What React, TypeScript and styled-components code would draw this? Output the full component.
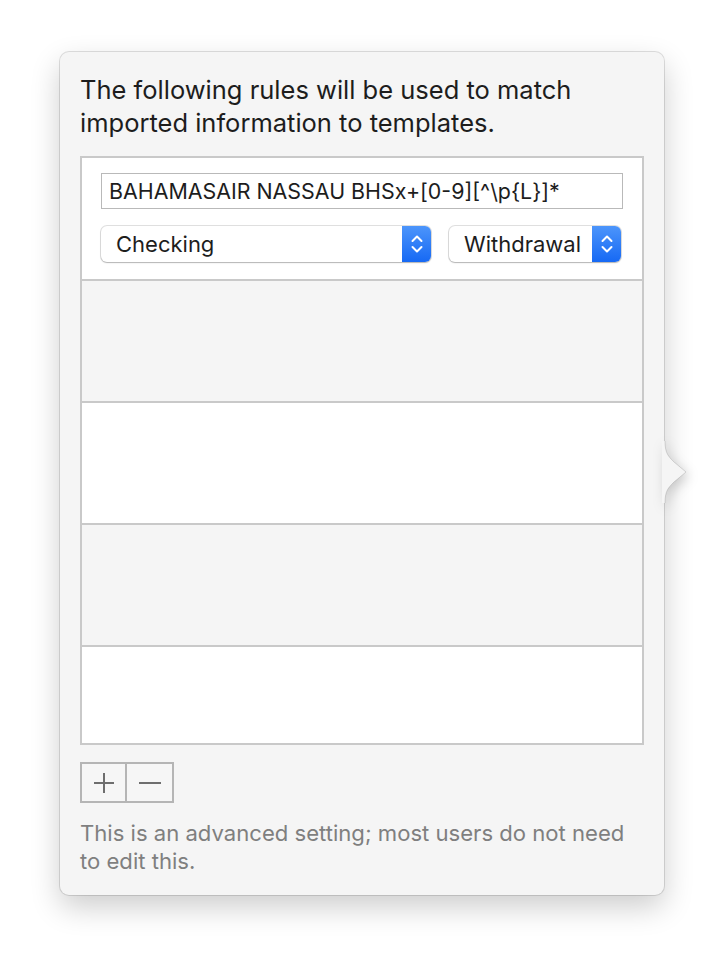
import styled, { createGlobalStyle } from "styled-components";

const GlobalStyle = createGlobalStyle`
  html, body {
    margin: 0;
    padding: 0;
    background: #ffffff;
  }
  body {
    font-family: Inter, "Liberation Sans", Arial, sans-serif;
    -webkit-font-smoothing: antialiased;
  }
`;

const Page = styled.div`
  padding: 52px 0 0 60px;
  height: 964px;
  box-sizing: border-box;
`;

const Popover = styled.div`
  position: relative;
  box-sizing: border-box;
  width: 604px;
  height: 843px;
  padding: 21px 20px 0 20px;
  background: #f5f5f5;
  border-radius: 9px;
  box-shadow: 0 0 0 1px rgba(0, 0, 0, 0.12), 0 12px 30px rgba(0, 0, 0, 0.2);
`;

const Arrow = styled.svg`
  position: absolute;
  top: 389px;
  right: -26px;
  filter: drop-shadow(3px 4px 6px rgba(0, 0, 0, 0.18));
`;

const Heading = styled.p`
  margin: 0 0 17px 0;
  font-size: 25.5px;
  line-height: 33px;
  color: #1d1d1d;
`;

const Table = styled.div`
  border: 2px solid #c9c9c9;
  height: 589px;
  box-sizing: border-box;
  overflow: hidden;
  background: #ffffff;
`;

const Row = styled.div<{ shaded?: boolean }>`
  height: 120px;
  background: ${(p) => (p.shaded ? "#f5f5f5" : "#ffffff")};
  & + & {
    border-top: 2px solid #c9c9c9;
  }
`;

const EditRow = styled(Row)`
  box-sizing: border-box;
  height: 121px;
  padding: 15px 19px 0 19px;
  display: flex;
  flex-direction: column;
  gap: 17px;
`;

const TextField = styled.div`
  box-sizing: border-box;
  height: 36px;
  border: 1px solid #b9b9b9;
  background: #ffffff;
  padding: 0 7px;
  display: flex;
  align-items: center;
  font-size: 21.4px;
  color: #1d1d1d;
  white-space: nowrap;
`;

const PopupRow = styled.div`
  display: flex;
  gap: 18px;
`;

const Popup = styled.div<{ w: number }>`
  box-sizing: border-box;
  width: ${(p) => p.w}px;
  height: 36px;
  display: flex;
  align-items: stretch;
  border-radius: 6px;
  background: #ffffff;
  box-shadow: 0 0 0 1px rgba(0, 0, 0, 0.12), 0 1px 1.5px rgba(0, 0, 0, 0.2);
  overflow: hidden;
`;

const PopupLabel = styled.div`
  flex: 1;
  display: flex;
  align-items: center;
  padding-left: 15px;
  font-size: 22px;
  color: #1d1d1d;
  white-space: nowrap;
`;

const Stepper = styled.div`
  width: 29px;
  flex: none;
  display: flex;
  align-items: center;
  justify-content: center;
  background: linear-gradient(#4c95fb, #1669f4);
`;

const ButtonBar = styled.div`
  display: flex;
  margin: 17px 0 0 0;
`;

const SquareButton = styled.div`
  box-sizing: border-box;
  width: 47px;
  height: 41px;
  border: 2px solid #b5b5b5;
  background: #f6f6f6;
  display: flex;
  align-items: center;
  justify-content: center;
  & + & {
    border-left: none;
  }
`;

const Note = styled.p`
  margin: 16px 0 0 0;
  font-size: 22.1px;
  line-height: 28px;
  color: #7f7f7f;
`;

function Chevrons() {
  return (
    <svg width="14" height="22" viewBox="0 0 14 22">
      <path
        d="M2.5 8 L7 3.5 L11.5 8 M2.5 14 L7 18.5 L11.5 14"
        fill="none"
        stroke="#ffffff"
        strokeWidth="2"
        strokeLinecap="round"
        strokeLinejoin="round"
      />
    </svg>
  );
}

function App() {
  return (
    <Page>
      <GlobalStyle />
      <Popover>
        <Heading>
          The following rules will be used to match
          <br />
          imported information to templates.
        </Heading>
        <Table>
          <EditRow>
            <TextField>BAHAMASAIR NASSAU BHSx+[0-9][^\p{"{"}L{"}"}]*</TextField>
            <PopupRow>
              <Popup w={330}>
                <PopupLabel>Checking</PopupLabel>
                <Stepper>
                  <Chevrons />
                </Stepper>
              </Popup>
              <Popup w={172}>
                <PopupLabel>Withdrawal</PopupLabel>
                <Stepper>
                  <Chevrons />
                </Stepper>
              </Popup>
            </PopupRow>
          </EditRow>
          <Row shaded />
          <Row />
          <Row shaded />
          <Row />
        </Table>
        <ButtonBar>
          <SquareButton>
            <svg width="22" height="22" viewBox="0 0 22 22">
              <path d="M11 1 V21 M1 11 H21" stroke="#6e6e6e" strokeWidth="2" />
            </svg>
          </SquareButton>
          <SquareButton>
            <svg width="22" height="22" viewBox="0 0 22 22">
              <path d="M0 11 H22" stroke="#6e6e6e" strokeWidth="2" />
            </svg>
          </SquareButton>
        </ButtonBar>
        <Note>
          This is an advanced setting; most users do not need
          <br />
          to edit this.
        </Note>
        <Arrow width="28" height="62" viewBox="0 0 28 62">
          <path
            d="M0 0 L3 0 C3 12 6 15 12 21 L24 31 L12 41 C6 47 3 50 3 62 L0 62 Z"
            fill="#f5f5f5"
          />
          <path
            d="M3 0 C3 12 6 15 12 21 L24 31 L12 41 C6 47 3 50 3 62"
            fill="none"
            stroke="rgba(0,0,0,0.13)"
            strokeWidth="1"
          />
        </Arrow>
      </Popover>
    </Page>
  );
}

export default App;
